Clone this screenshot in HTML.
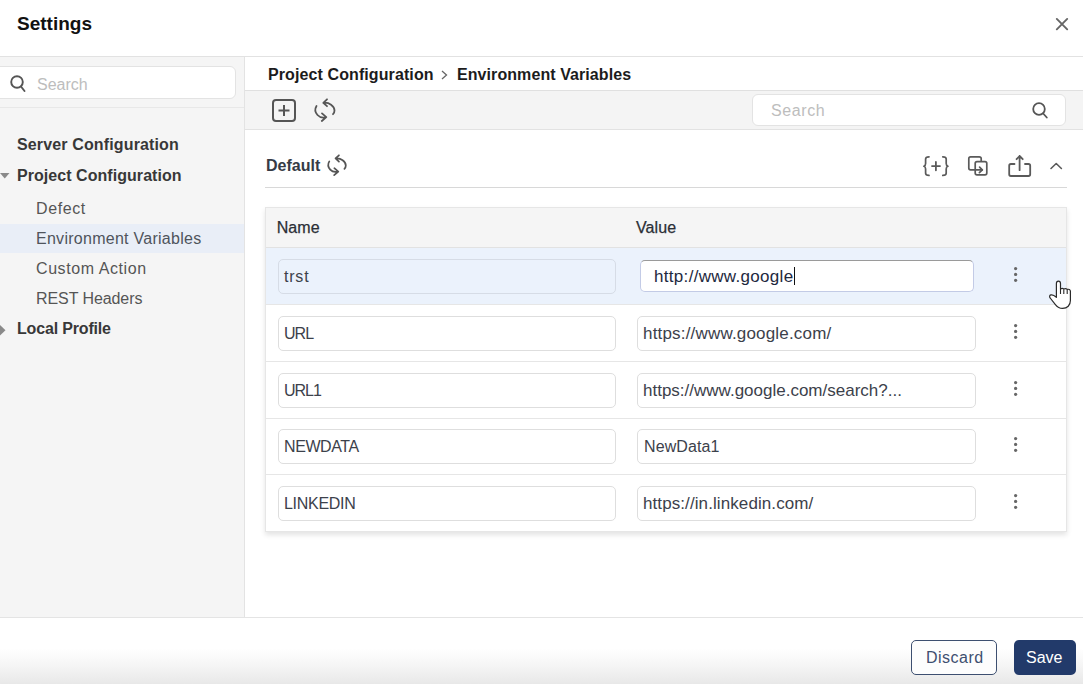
<!DOCTYPE html>
<html><head><meta charset="utf-8">
<style>
*{box-sizing:border-box;margin:0;padding:0}
html,body{width:1083px;height:684px;overflow:hidden;background:#fff;font-family:"Liberation Sans",sans-serif;color:#333}
.a{position:absolute}
.t{position:absolute;white-space:pre;line-height:1}
svg{position:absolute;overflow:visible}
</style></head><body>
<!-- header -->
<div class="t" style="left:17px;top:14px;font-size:19px;font-weight:700;color:#111">Settings</div>
<svg style="left:1055px;top:17px" width="14" height="14" viewBox="0 0 14 14"><path d="M1.8 1.9L12.2 12.3M12.2 1.9L1.8 12.3" stroke="#666" stroke-width="1.9" stroke-linecap="round"/></svg>
<div class="a" style="left:0;top:56px;width:1083px;height:1px;background:#e2e2e2"></div>

<!-- sidebar -->
<div class="a" style="left:0;top:57px;width:244px;height:561px;background:#f5f5f5"></div>
<div class="a" style="left:244px;top:57px;width:1px;height:561px;background:#e3e3e3"></div>
<div class="a" style="left:-8px;top:66px;width:244px;height:33px;background:#fff;border:1px solid #e3e3e3;border-radius:6px"></div>
<svg style="left:10px;top:75px" width="16" height="18" viewBox="0 0 16 18"><circle cx="7" cy="7" r="5.8" fill="none" stroke="#555" stroke-width="1.9"/><path d="M11 11.5L14.5 16" stroke="#555" stroke-width="1.9" stroke-linecap="round"/></svg>
<div class="t" style="left:37px;top:77px;font-size:16px;color:#bdbdbd">Search</div>
<div class="a" style="left:0;top:107px;width:244px;height:1px;background:#e8e8e8"></div>

<div class="t" style="left:17px;top:137px;font-size:16px;font-weight:700;color:#383838;letter-spacing:.14px">Server Configuration</div>
<svg style="left:0;top:173px" width="10" height="6" viewBox="0 0 10 6"><path d="M0 0H9.5L4.75 5.5Z" fill="#8a8a8a"/></svg>
<div class="t" style="left:17px;top:168px;font-size:16px;font-weight:700;color:#383838;letter-spacing:.05px">Project Configuration</div>
<div class="t" style="left:36px;top:201px;font-size:16px;color:#555;letter-spacing:.6px">Defect</div>
<div class="a" style="left:0;top:224px;width:244px;height:29px;background:#e9eef7"></div>
<div class="t" style="left:36px;top:231px;font-size:16px;color:#4f545c;letter-spacing:.27px">Environment Variables</div>
<div class="t" style="left:36px;top:261px;font-size:16px;color:#555;letter-spacing:.58px">Custom Action</div>
<div class="t" style="left:36px;top:291px;font-size:16px;color:#555;letter-spacing:-.08px">REST Headers</div>
<svg style="left:0;top:324.5px" width="6" height="11" viewBox="0 0 6 11"><path d="M0 0L5.5 5.25L0 10.5Z" fill="#8a8a8a"/></svg>
<div class="t" style="left:17px;top:321px;font-size:16px;font-weight:700;color:#383838;letter-spacing:-.17px">Local Profile</div>

<!-- main breadcrumb -->
<div class="t" style="left:268px;top:67px;font-size:16px;font-weight:700;color:#1c1c1c;letter-spacing:.1px">Project Configuration</div>
<svg style="left:441px;top:69.5px" width="7" height="10" viewBox="0 0 7 10"><path d="M1 1L5.5 5L1 9" fill="none" stroke="#666" stroke-width="1.3"/></svg>
<div class="t" style="left:457px;top:67px;font-size:16px;font-weight:700;color:#1c1c1c;letter-spacing:.08px">Environment Variables</div>
<div class="a" style="left:245px;top:90px;width:838px;height:1px;background:#e0e0e0"></div>
<div class="a" style="left:245px;top:91px;width:838px;height:38px;background:#f4f4f4"></div>
<div class="a" style="left:245px;top:129px;width:838px;height:1px;background:#e2e2e2"></div>
<!-- toolbar icons -->
<svg style="left:272px;top:99px" width="24" height="24" viewBox="0 0 24 24"><rect x="1" y="1" width="22" height="21" rx="3" fill="none" stroke="#555" stroke-width="2"/><path d="M12 6V17M6.5 11.5H17.5" stroke="#555" stroke-width="2"/></svg>
<svg style="left:314px;top:99px" width="22" height="24" viewBox="0 0 22 24"><path d="M9.5 3.8C15 3 20.5 7 20.5 11.5C20.5 13 20 14.2 19 15.2M13 0.3L9.3 3.8L13 7.2M2.5 7C1 9.5 0.8 13 3.5 16C5.5 18.2 9 19 12.3 18.1M8 14.4L12.3 18.1L7.8 22" fill="none" stroke="#555" stroke-width="1.8" stroke-linecap="round" stroke-linejoin="round"/></svg>
<div class="a" style="left:752px;top:94px;width:314px;height:32px;background:#fff;border:1px solid #e3e3e3;border-radius:6px"></div>
<div class="t" style="left:771px;top:103px;font-size:16px;color:#bdbdbd;letter-spacing:.6px">Search</div>
<svg style="left:1032.4px;top:101.6px" width="17" height="18" viewBox="0 0 17 18"><circle cx="7" cy="7" r="5.8" fill="none" stroke="#555" stroke-width="1.8"/><path d="M11.2 11.5L14.8 15.5" stroke="#555" stroke-width="1.8" stroke-linecap="round"/></svg>

<!-- Default section -->
<div class="t" style="left:266px;top:158px;font-size:16px;font-weight:700;color:#363b45">Default</div>
<svg style="left:327px;top:155px" width="20.2" height="22" viewBox="0 0 22 24"><path d="M9.5 3.8C15 3 20.5 7 20.5 11.5C20.5 13 20 14.2 19 15.2M13 0.3L9.3 3.8L13 7.2M2.5 7C1 9.5 0.8 13 3.5 16C5.5 18.2 9 19 12.3 18.1M8 14.4L12.3 18.1L7.8 22" fill="none" stroke="#555" stroke-width="1.9" stroke-linecap="round" stroke-linejoin="round"/></svg>
<div class="a" style="left:265px;top:187px;width:802px;height:1px;background:#d8d8d8"></div>
<svg style="left:0;top:0" width="1083" height="684" viewBox="0 0 1083 684">
<g fill="none" stroke="#5a5a5a" stroke-width="1.7" stroke-linecap="round" stroke-linejoin="round">
<path d="M929 156.8C927 156.8 925.6 157.3 925.6 159V163.5C925.6 165.2 925 165.9 923.9 166.2C925 166.5 925.6 167.2 925.6 168.9V173.2C925.6 174.9 927 175.4 929 175.4"/>
<path d="M942.8 156.8C944.8 156.8 946.2 157.3 946.2 159V163.5C946.2 165.2 946.8 165.9 947.9 166.2C946.8 166.5 946.2 167.2 946.2 168.9V173.2C946.2 174.9 944.8 175.4 942.8 175.4"/>
<path d="M932 166.1H940M935.9 162V170.3" stroke-width="1.8"/>
<path d="M981.2 161V158.6C981.2 157.4 980.4 156.8 979.2 156.8H970.6C969.4 156.8 968.8 157.4 968.8 158.6V168C968.8 169.2 969.4 169.9 970.6 169.9H982.3"/>
<path d="M979.6 167.2L982.3 169.9L979.4 172.6"/>
<rect x="975.2" y="161.6" width="11.6" height="13.2" rx="1.8"/>
<path d="M1014.5 164H1010.9C1009.8 164 1009.2 164.6 1009.2 165.7V174.3C1009.2 175.4 1009.8 176 1010.9 176H1028.5C1029.6 176 1030.2 175.4 1030.2 174.3V165.7C1030.2 164.6 1029.6 164 1028.5 164H1025" stroke-width="1.8"/>
<path d="M1019.6 170.2V156M1016.6 159.2L1019.6 156L1022.7 159.2" stroke-width="1.8"/>
<path d="M1051 168.5L1056.2 163.5L1061.4 168.5" stroke-width="1.6"/>
</g>
</svg>


<!-- table -->
<div class="a" style="left:265px;top:207px;width:802px;height:325px;border:1px solid #e6e6e6;box-shadow:0 3px 5px rgba(0,0,0,.11);background:#fff"></div>
<div class="a" style="left:266px;top:208px;width:800px;height:39px;background:#f5f5f5"></div>
<div class="a" style="left:266px;top:247px;width:800px;height:1px;background:#e2e2e2"></div>
<div class="t" style="left:276.7px;top:220px;font-size:16px;color:#2b2f36;letter-spacing:.1px;-webkit-text-stroke:.25px #2b2f36">Name</div>
<div class="t" style="left:636px;top:220px;font-size:16px;color:#2b2f36;letter-spacing:.1px;-webkit-text-stroke:.25px #2b2f36">Value</div>

<div class="a" style="left:266px;top:248px;width:800px;height:56px;background:#ebf2fc"></div>
<div class="a" style="left:266px;top:304px;width:800px;height:1px;background:#e6e6e6"></div>
<div class="a" style="left:266px;top:361px;width:800px;height:1px;background:#e6e6e6"></div>
<div class="a" style="left:266px;top:418px;width:800px;height:1px;background:#e6e6e6"></div>
<div class="a" style="left:266px;top:474px;width:800px;height:1px;background:#e6e6e6"></div>
<div class="a" style="left:278px;top:259px;width:338px;height:35px;border:1px solid #d6dce6;border-radius:5px"></div>
<div class="t" style="left:284px;top:269px;font-size:16px;color:#3c414b;letter-spacing:.8px">trst</div>
<div class="a" style="left:640px;top:260px;width:334px;height:32px;border:1px solid #c3cbe6;border-top-color:#9a9a9a;border-radius:5px;background:#fff"></div>
<div class="t" style="left:654px;top:268px;font-size:17px;color:#1e2940;letter-spacing:.31px">http://www.google</div>
<div class="a" style="left:794px;top:267px;width:1px;height:18px;background:#111"></div>
<div class="a" style="left:278px;top:316px;width:338px;height:35px;border:1px solid #dedede;border-radius:5px;background:#fff"></div>
<div class="t" style="left:284px;top:326px;font-size:16px;color:#3c414b;letter-spacing:-.95px">URL</div>
<div class="a" style="left:637px;top:316px;width:339px;height:35px;border:1px solid #dedede;border-radius:5px;background:#fff"></div>
<div class="t" style="left:643px;top:325px;font-size:17px;color:#3c414b;letter-spacing:.18px">https://www.google.com/</div>
<div class="a" style="left:278px;top:373px;width:338px;height:35px;border:1px solid #dedede;border-radius:5px;background:#fff"></div>
<div class="t" style="left:284px;top:383px;font-size:16px;color:#3c414b;letter-spacing:-1px">URL1</div>
<div class="a" style="left:637px;top:373px;width:339px;height:35px;border:1px solid #dedede;border-radius:5px;background:#fff"></div>
<div class="t" style="left:643px;top:382px;font-size:17px;color:#3c414b;letter-spacing:0px">https://www.google.com/search?...</div>
<div class="a" style="left:278px;top:429px;width:338px;height:35px;border:1px solid #dedede;border-radius:5px;background:#fff"></div>
<div class="t" style="left:284px;top:439px;font-size:16px;color:#3c414b;letter-spacing:-.42px">NEWDATA</div>
<div class="a" style="left:637px;top:429px;width:339px;height:35px;border:1px solid #dedede;border-radius:5px;background:#fff"></div>
<div class="t" style="left:644px;top:439px;font-size:16px;color:#3c414b;letter-spacing:.1px">NewData1</div>
<div class="a" style="left:278px;top:486px;width:338px;height:35px;border:1px solid #dedede;border-radius:5px;background:#fff"></div>
<div class="t" style="left:284px;top:496px;font-size:16px;color:#3c414b;letter-spacing:-.29px">LINKEDIN</div>
<div class="a" style="left:637px;top:486px;width:339px;height:35px;border:1px solid #dedede;border-radius:5px;background:#fff"></div>
<div class="t" style="left:643px;top:495px;font-size:17px;color:#3c414b;letter-spacing:.09px">https://in.linkedin.com/</div>
<svg style="left:0;top:0" width="1083" height="684" viewBox="0 0 1083 684"><g fill="#666"><circle cx="1015.6" cy="268.60" r="1.6"/><circle cx="1015.6" cy="274.45" r="1.6"/><circle cx="1015.6" cy="280.30" r="1.6"/><circle cx="1015.6" cy="325.60" r="1.6"/><circle cx="1015.6" cy="331.45" r="1.6"/><circle cx="1015.6" cy="337.30" r="1.6"/><circle cx="1015.6" cy="382.60" r="1.6"/><circle cx="1015.6" cy="388.45" r="1.6"/><circle cx="1015.6" cy="394.30" r="1.6"/><circle cx="1015.6" cy="438.60" r="1.6"/><circle cx="1015.6" cy="444.45" r="1.6"/><circle cx="1015.6" cy="450.30" r="1.6"/><circle cx="1015.6" cy="495.60" r="1.6"/><circle cx="1015.6" cy="501.45" r="1.6"/><circle cx="1015.6" cy="507.30" r="1.6"/></g></svg>
<!-- footer -->
<div class="a" style="left:0;top:617px;width:1083px;height:67px;background:linear-gradient(#fff 0,#fff 47%,#f6f6f6 70%,#e8e8e8 100%)"></div>
<div class="a" style="left:0;top:617px;width:1083px;height:1px;background:#e4e4e4"></div>
<div class="a" style="left:911px;top:640px;width:86px;height:35px;border:1px solid #3d4f70;border-radius:5px;background:#fdfdfd"></div>
<div class="t" style="left:926px;top:650px;font-size:16px;color:#3d4f70;letter-spacing:.5px">Discard</div>
<div class="a" style="left:1014px;top:640px;width:62px;height:35px;border-radius:5px;background:#223a6a"></div>
<div class="t" style="left:1026px;top:650px;font-size:16px;color:#fff">Save</div>
<svg style="left:0;top:0" width="1083" height="684" viewBox="0 0 1083 684">
<path d="M1056.4 297.3V283.6C1056.4 282 1057.4 281.1 1058.45 281.1C1059.5 281.1 1060.5 282 1060.5 283.6V289C1061.5 288.4 1063 288.4 1063.8 289C1064.8 288.6 1066.3 288.6 1067.2 289.4C1068.6 289 1070.4 289.6 1070.4 291.2V300.5C1070.4 305.2 1067.2 308.4 1062.6 308.4C1059.2 308.4 1057.2 306.8 1055.2 304.3L1050.2 298C1049.2 296.8 1049.5 295.3 1050.9 294.9C1052.6 294.4 1054.2 295.3 1056.4 297.3Z" fill="#fff" stroke="#2a2a2a" stroke-width="1.2" stroke-linejoin="round"/>
<path d="M1060.5 289V294M1063.8 289.2V294M1067.2 289.6V294" stroke="#2a2a2a" stroke-width="1.1" fill="none"/>
</svg>
</body></html>
